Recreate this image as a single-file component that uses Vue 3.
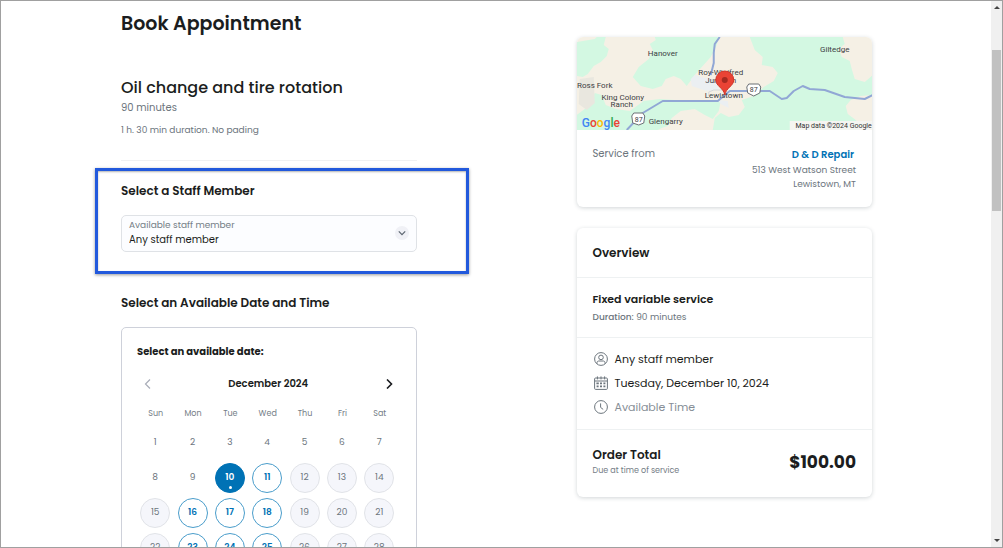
<template>
  <div class="window">
    <main class="page">
      <div class="column">
        <h1>Book Appointment</h1>

        <section class="service">
          <h2>Oil change and tire rotation</h2>
          <p class="service-length">90 minutes</p>
          <p class="service-note">1 h. 30 min duration. No pading</p>
        </section>

        <section class="staff">
          <h3>Select a Staff Member</h3>
          <div class="field">
            <div class="field-body">
              <label for="staff">Available staff member</label>
              <select id="staff" v-model="staff">
                <option v-for="name in staffOptions" :key="name">{{ name }}</option>
              </select>
            </div>
            <svg class="field-arrow" viewBox="0 0 14 14" aria-hidden="true">
              <circle cx="7" cy="7" r="7" fill="#f0f1f6" />
              <path d="M3.8 5.4 7 8.6l3.2-3.2" fill="none" stroke="#5c6570" stroke-width="1.2" />
            </svg>
          </div>
        </section>

        <section class="schedule">
          <h3>Select an Available Date and Time</h3>
          <div class="calendar">
            <h4>Select an available date:</h4>
            <div class="month">
              <button type="button" class="month-nav" aria-label="Previous month" disabled>
                <svg viewBox="0 0 10 10"><path d="M7 .5 2.5 5 7 9.5" /></svg>
              </button>
              <strong>December 2024</strong>
              <button type="button" class="month-nav" aria-label="Next month">
                <svg viewBox="0 0 10 10"><path d="M3 .5 7.5 5 3 9.5" /></svg>
              </button>
            </div>
            <table>
              <thead>
                <tr>
                  <th v-for="day in weekdays" :key="day" scope="col">{{ day }}</th>
                </tr>
              </thead>
              <tbody>
                <tr v-for="(week, i) in weeks" :key="i">
                  <td v-for="day in week" :key="day">
                    <button
                      type="button"
                      class="day"
                      :class="[dayState(day), { selected: day === selected }]"
                      :disabled="dayState(day) !== 'open'"
                      @click="selected = day"
                    >{{ day }}</button>
                  </td>
                </tr>
              </tbody>
            </table>
          </div>
        </section>
      </div>

      <aside class="column side">
        <section class="card">
          <svg class="map" viewBox="0 0 296 93" preserveAspectRatio="xMidYMid slice" role="img" aria-label="Map of Lewistown">
            <rect width="296" height="93" fill="#f5f0e5" />
            <g fill="#d3f8e2">
              <path d="M0 5l18-3 2-2h9l-2 8 5 4-2 7-6 6-7 4-6 8-5 3-6-1z" />
              <path d="M78 0h64l-2 8-6 12-9 10-7 8-8 11-6-7-7-3-8 3-4 7-9 3-12-3-8-9 6-10 10-8 4-9-3-6 6-4z" />
              <path d="M0 78l12-9 6-13 7 2 4 10 10 4 14 2 14-10 16-2 30 2 31 0-2 10-6 8-8-4-10-6-14 2-9 7-4 8-6 2-4 2H0z" />
              <path d="M173 0h93l2 7-6 5 3 8 8 4 2 8 3 10 10 3 8-7v20l-12 1-10 4-5 6 2 8 8 6 6 8v2H136l2-12 6-5 8 4 10-2 6-8-3-7 12-4 10-9 10-6 4-8-5-6-11-2 1-8-8-7z" />
            </g>
            <path d="M3 42l14-2 1 26-8 7-8-6z" fill="#e9e7df" />
            <path d="M114 42l4-4 10 3 11 2 3 9-12 2-15-5zM141 63l10 1 1 7-8-4z" fill="#ebeff2" />
            <path d="M132 59v-4l5-2h10" fill="none" stroke="#d5d8dc" />
            <g fill="none" stroke="#91a7d5" stroke-width="2" stroke-linejoin="round">
              <path d="M50 93l16-17 20-12h55l12-10h40l12 8 5-1 7-7 9-5 7 3 15 1 20 7 20 2 8-4" />
              <path d="M143 0l-5 7-1 9v10l-3 12" />
            </g>
            <g fill="#fff" stroke="#6b7075">
              <path d="M57 76h9l2 3-1 7-5 2-6-2-1-7z" />
              <path d="M172 47h10l2 3-1 6-6 3-6-3-1-6z" />
            </g>
            <g class="map-labels">
              <text x="86" y="19">Hanover</text>
              <text x="258" y="15">Giltedge</text>
              <text x="144" y="38">Roy-Winifred</text>
              <text x="144" y="46">Junction</text>
              <text x="18" y="51">Ross Fork</text>
              <text x="46" y="63">King Colony</text>
              <text x="45" y="70">Ranch</text>
              <text x="147" y="61">Lewistown</text>
              <text x="89" y="87">Glengarry</text>
              <text class="road" x="62" y="85">87</text>
              <text class="road" x="177" y="55">87</text>
            </g>
            <path d="M148 58c-1-7-9-9-9-15a9 9 0 0 1 18 0c0 6-8 8-9 15z" fill="#ea4335" stroke="#d0362a" />
            <circle cx="148" cy="43" r="3" fill="#a52a21" />
            <rect x="213" y="84" width="83" height="9" fill="#f5f5f1" />
            <text class="credit" x="295" y="91">Map data ©2024 Google</text>
            <text class="google" x="5" y="90"><tspan fill="#4285f4">G</tspan><tspan fill="#ea4335">o</tspan><tspan fill="#fbbc04">o</tspan><tspan fill="#4285f4">g</tspan><tspan fill="#34a853">l</tspan><tspan fill="#ea4335">e</tspan></text>
          </svg>
          <div class="provider">
            <span>Service from</span>
            <address>
              <a href="#">D &amp; D Repair</a>
              <span>513 West Watson Street</span>
              <span>Lewistown, MT</span>
            </address>
          </div>
        </section>

        <section class="card">
          <h3 class="overview-title">Overview</h3>
          <div class="overview-service">
            <strong>Fixed variable service</strong>
            <span><b>Duration:</b> 90 minutes</span>
          </div>
          <ul class="details">
            <li>
              <svg viewBox="0 0 14 14" aria-hidden="true">
                <circle cx="7" cy="7" r="6.4" />
                <circle cx="7" cy="5.4" r="2.3" />
                <path d="M3 11.8V10.6c0-1 .8-1.6 1.7-1.6h4.6c.9 0 1.7.6 1.7 1.6v1.2" />
              </svg>
              {{ staff }}
            </li>
            <li>
              <svg viewBox="0 0 14 14" aria-hidden="true">
                <rect x=".6" y="2" width="12.8" height="11.4" rx="1" />
                <path d="M.6 5h12.8M3.4.4v3M7 .4v3M10.6.4v3" />
                <path d="M2.4 7.4h2.4M6 7.4h2M9.4 7.4h2M2.6 10.4h2M6 10.4h2M9.4 10.4h2" stroke-width="1.6" />
              </svg>
              Tuesday, December {{ selected }}, 2024
            </li>
            <li class="pending">
              <svg viewBox="0 0 14 14" aria-hidden="true">
                <circle cx="7" cy="7" r="6.4" />
                <path d="M6.6 3.4v4l2.6 2" />
              </svg>
              Available Time
            </li>
          </ul>
          <div class="total">
            <div>
              <strong>Order Total</strong>
              <small>Due at time of service</small>
            </div>
            <span class="price">$100.00</span>
          </div>
        </section>
      </aside>
    </main>

    <div class="scrollbar" aria-hidden="true">
      <i class="arrow up"></i>
      <i class="thumb"></i>
      <i class="arrow down"></i>
    </div>
  </div>
</template>

<script setup>
import { ref } from 'vue'

const staffOptions = ['Any staff member']
const staff = ref(staffOptions[0])
const selected = ref(10)

const weekdays = ['Sun', 'Mon', 'Tue', 'Wed', 'Thu', 'Fri', 'Sat']
const weeks = [0, 1, 2, 3].map(week => weekdays.map((_, i) => week * 7 + i + 1))
const openDays = [10, 11, 16, 17, 18, 23, 24, 25]

const dayState = day => {
  if (day < 10) return 'past'
  return openDays.includes(day) ? 'open' : 'full'
}
</script>

<style>
body {
  overflow: hidden;
}
</style>

<style scoped>
* {
  box-sizing: border-box;
}

.window {
  display: flex;
  height: 100vh;
  border: 1px solid #a0a0a0;
  background: #fff;
  color: #1b1d20;
  font-family: Poppins, Inter, sans-serif;
  font-size: 11px;
}

.page {
  flex: 1;
  display: grid;
  grid-template-columns: 1fr 1fr;
  gap: 160px;
  padding: 0 119px 0 120px;
  overflow: hidden;
}

.column {
  min-width: 0;
}

h1,
h2,
h3,
h4,
p,
ul {
  margin: 0;
  padding: 0;
}

button,
select {
  padding: 0;
  border: 0;
  background: none;
  color: inherit;
  font: inherit;
}

h1 {
  margin-top: 7px;
  font-size: 19px;
  font-weight: 600;
  line-height: 32px;
}

h2 {
  font-size: 16px;
  font-weight: 500;
  line-height: 24px;
}

h3 {
  font-size: 12px;
  font-weight: 600;
  line-height: 20px;
}

.service {
  margin-top: 36px;
  padding-bottom: 22px;
  border-bottom: 1px solid #f0f1f3;
  color: #6c757d;
  font-size: 10px;
  line-height: 16px;
}

.service h2 {
  color: #1b1d20;
}

.service-note {
  margin-top: 6px;
  font-size: 9px;
}

.staff {
  position: relative;
  padding: 20px 0;
}

/* Highlight frame, drawn wider than the column it surrounds */
.staff::after {
  content: '';
  position: absolute;
  top: 7px;
  right: -52px;
  bottom: -2px;
  left: -26px;
  border: 3px solid #2259dc;
  box-shadow: 0 1px 3px rgba(0, 0, 0, 0.4), inset 0 1px 2px rgba(0, 0, 0, 0.3);
  pointer-events: none;
}

.field {
  display: flex;
  align-items: center;
  margin-top: 14px;
  padding: 3px 7px 4px;
  border: 1px solid #dfe2e6;
  border-radius: 5px;
  background: #fcfdff;
}

.field-body {
  flex: 1;
}

.field label {
  display: block;
  color: #747d86;
  font-size: 9px;
  line-height: 13px;
}

.field select {
  display: block;
  width: 100%;
  height: 15px;
  appearance: none;
  font-size: 10px;
}

.field-arrow {
  width: 14px;
  height: 14px;
}

.schedule {
  margin-top: 21px;
}

.calendar {
  margin-top: 14px;
  padding: 16px 17px 15px 15px;
  border: 1px solid #ced1da;
  border-radius: 5px;
}

h4 {
  font-size: 10px;
  line-height: 16px;
}

.month {
  display: flex;
  align-items: center;
  justify-content: space-between;
  margin-top: 14px;
  padding: 0 5px 0 6px;
  font-size: 10px;
  line-height: 20px;
}

.month strong {
  font-weight: 600;
}

.month-nav {
  display: flex;
}

.month-nav svg {
  width: 10px;
  height: 10px;
  fill: none;
  stroke: #1b1d20;
  stroke-width: 1.6;
}

.month-nav:disabled svg {
  stroke: #a9adb8;
  stroke-width: 1.2;
}

table {
  width: 100%;
  margin-top: 12px;
  border-collapse: collapse;
  table-layout: fixed;
}

th {
  height: 19px;
  padding: 0 0 3px;
  color: #747d86;
  font-size: 8px;
  font-weight: 400;
}

td {
  height: 35px;
  padding: 0 1px 0 0;
  text-align: center;
}

.day {
  position: relative;
  display: block;
  width: 30px;
  height: 30px;
  margin: 0 auto;
  border: 1px solid transparent;
  border-radius: 50%;
  color: #6c757d;
  font-size: 9px;
}

.day.full {
  border-color: #e1e3e8;
  background: #f5f6fb;
}

.day.open {
  border-color: #4a9dcb;
  color: #0072b5;
  font-weight: 600;
}

.day.selected {
  border-color: #0072b5;
  background: #0072b5;
  color: #fff;
}

.day.selected::after {
  content: '';
  position: absolute;
  bottom: 3px;
  left: 13px;
  width: 3px;
  height: 3px;
  border-radius: 50%;
  background: #fff;
}

.side {
  display: flex;
  flex-direction: column;
  gap: 21px;
  padding-top: 36px;
}

.card {
  border-radius: 6px;
  box-shadow: 0 1px 4px rgba(30, 50, 60, 0.2);
  overflow: hidden;
}

.map {
  display: block;
  width: 100%;
  height: 93px;
}

.map text {
  font-family: Roboto, sans-serif;
}

.map-labels text {
  fill: #3c4043;
  font-size: 8px;
  text-anchor: middle;
}

.map-labels .road {
  font-size: 7px;
}

.map .credit {
  fill: #333;
  font-size: 7px;
  text-anchor: end;
}

.map .google {
  font-size: 12px;
  font-weight: 500;
}

.provider {
  display: flex;
  justify-content: space-between;
  padding: 16px;
  color: #6c757d;
  font-size: 10px;
  line-height: 15px;
}

address {
  display: flex;
  flex-direction: column;
  align-items: flex-end;
  padding-top: 1px;
  font-size: 9px;
  font-style: normal;
  line-height: 14px;
}

address a {
  margin-right: 2px;
  color: #0072b5;
  font-size: 10px;
  font-weight: 600;
  line-height: 16px;
  text-decoration: none;
}

.overview-title {
  padding: 15px 16px 14px;
}

.overview-service,
.details,
.total {
  border-top: 1px solid #eef1f2;
}

.overview-service {
  display: flex;
  flex-direction: column;
  padding: 12px 16px 11px;
  line-height: 18px;
}

.overview-service strong {
  font-weight: 600;
}

.overview-service span {
  color: #6c757d;
  font-size: 9px;
}

.overview-service b {
  font-weight: 500;
}

.details {
  padding: 9px 17px 10px;
  list-style: none;
}

.details li {
  display: flex;
  align-items: center;
  gap: 7px;
  line-height: 24px;
}

.details svg {
  width: 14px;
  height: 14px;
  fill: none;
  stroke: #6c757d;
}

.details .pending {
  color: #868e96;
}

.total {
  display: flex;
  align-items: center;
  justify-content: space-between;
  padding: 16px 16px 19px;
}

.total strong,
.total small {
  display: block;
}

.total strong {
  font-size: 12px;
  font-weight: 600;
  line-height: 18px;
}

.total small {
  color: #747d86;
  font-size: 8px;
  line-height: 14px;
}

.price {
  font-size: 17px;
  font-weight: 700;
}

.scrollbar {
  display: flex;
  flex-direction: column;
  align-items: center;
  width: 11px;
  padding: 5px 0;
  background: #f0f0f0;
}

.thumb {
  width: 9px;
  height: 30%;
  margin-top: 41px;
  background: #c1c1c1;
}

.arrow {
  border: 3px solid transparent;
}

.up {
  border-top: 0;
  border-bottom-color: #444;
}

.down {
  margin-top: auto;
  border-bottom: 0;
  border-top-color: #444;
}
</style>
